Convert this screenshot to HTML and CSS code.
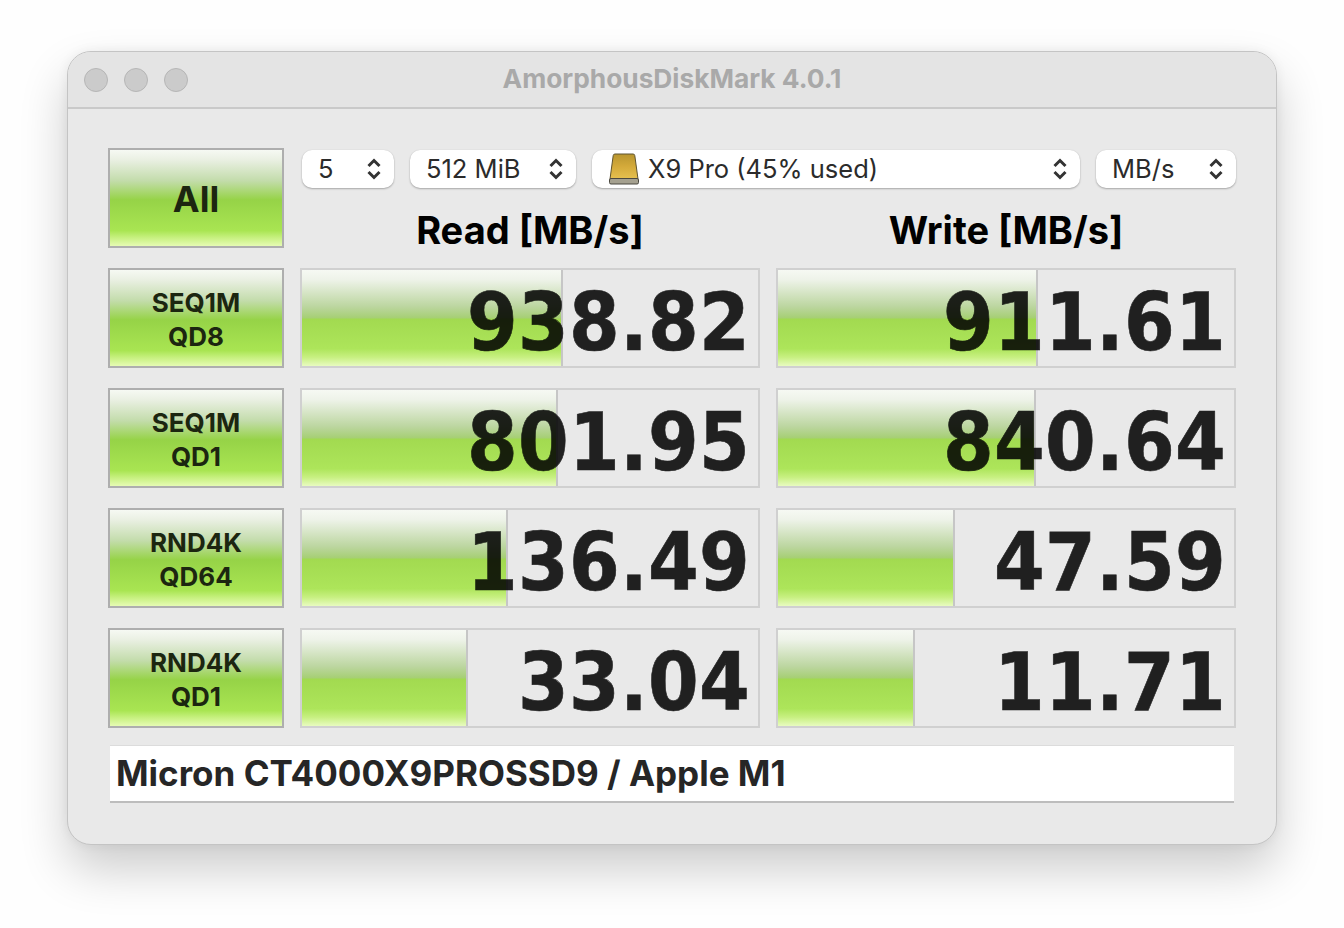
FILE: index.html
```html
<!DOCTYPE html>
<html lang="en">
<head>
    <meta charset="UTF-8">
    <title>AmorphousDiskMark 4.0.1</title>
    <link rel="stylesheet" href="styles.css">
</head>
<body>

    <div class="window">
        <div class="titlebar">
            <div class="lights">
                <span class="light"></span>
                <span class="light"></span>
                <span class="light"></span>
            </div>
            <div class="title">AmorphousDiskMark 4.0.1</div>
        </div>

        <div class="content">
            <div class="board">
                <div class="btn btn-all">All</div>

                <div class="head">
                    <div class="selects">
                        <div class="select sel-count">
                            <span>5</span>
                            <svg class="updown" viewBox="0 0 16 22"><path d="M2.5 8 8 2.5 13.5 8M2.5 14 8 19.5 13.5 14"/></svg>
                        </div>
                        <div class="select sel-size">
                            <span>512 MiB</span>
                            <svg class="updown" viewBox="0 0 16 22"><path d="M2.5 8 8 2.5 13.5 8M2.5 14 8 19.5 13.5 14"/></svg>
                        </div>
                        <div class="select sel-disk">
                            <svg class="disk" viewBox="0 0 30 32">
                                <defs>
                                    <linearGradient id="gold" x1="0" y1="0" x2="0" y2="1">
                                        <stop offset="0" stop-color="#b8952f"/>
                                        <stop offset="0.5" stop-color="#d4aa3a"/>
                                        <stop offset="1" stop-color="#e6c150"/>
                                    </linearGradient>
                                </defs>
                                <path d="M6 1H24Q25.6 1 25.8 2.6L29 26H1L4.2 2.6Q4.4 1 6 1Z" fill="url(#gold)" stroke="#5f5430" stroke-width="1"/>
                                <rect x="0.5" y="25.5" width="29" height="5.5" rx="1.5" fill="#a5a190" stroke="#4a4840" stroke-width="1"/>
                            </svg>
                            <span class="disk-name">X9 Pro (45% used)</span>
                            <svg class="updown" viewBox="0 0 16 22"><path d="M2.5 8 8 2.5 13.5 8M2.5 14 8 19.5 13.5 14"/></svg>
                        </div>
                        <div class="select sel-unit">
                            <span>MB/s</span>
                            <svg class="updown" viewBox="0 0 16 22"><path d="M2.5 8 8 2.5 13.5 8M2.5 14 8 19.5 13.5 14"/></svg>
                        </div>
                    </div>
                    <div class="heads">
                        <div class="heading">Read [MB/s]</div>
                        <div class="heading">Write [MB/s]</div>
                    </div>
                </div>

                <!-- SEQ1M QD8 -->
                <div class="btn">SEQ1M<br>QD8</div>
                <div class="cell"><div class="bar" style="width:261px"></div><div class="val">938.82</div></div>
                <div class="cell"><div class="bar" style="width:260px"></div><div class="val">911.61</div></div>

                <!-- SEQ1M QD1 -->
                <div class="btn">SEQ1M<br>QD1</div>
                <div class="cell"><div class="bar" style="width:256px"></div><div class="val">801.95</div></div>
                <div class="cell"><div class="bar" style="width:258px"></div><div class="val">840.64</div></div>

                <!-- RND4K QD64 -->
                <div class="btn">RND4K<br>QD64</div>
                <div class="cell"><div class="bar" style="width:206px"></div><div class="val">136.49</div></div>
                <div class="cell"><div class="bar" style="width:177px"></div><div class="val">47.59</div></div>

                <!-- RND4K QD1 -->
                <div class="btn">RND4K<br>QD1</div>
                <div class="cell"><div class="bar" style="width:166px"></div><div class="val">33.04</div></div>
                <div class="cell"><div class="bar" style="width:137px"></div><div class="val">11.71</div></div>
            </div>

            <div class="comment">Micron CT4000X9PROSSD9 / Apple M1</div>
        </div>
    </div>

</body>
</html>
```

FILE: styles.css
```css
body {
    margin: 0;
    height: 928px;
    overflow: hidden;
    background-color: #fefefe;
    font-family: 'Inter', 'Liberation Sans', sans-serif;
    color: #222;
}
.window {
    width: 1210px;
    height: 794px;
    margin: 51px 0 0 67px;
    box-sizing: border-box;
    background-color: #e9e9e9;
    border: 1px solid #c4c4c4;
    border-radius: 24px;
    box-shadow: 0 24px 48px rgba(0,0,0,0.2), 0 0 12px rgba(0,0,0,0.06);
    overflow: hidden;
}
.titlebar {
    height: 57px;
    box-sizing: border-box;
    background-color: #e4e4e4;
    border-bottom: 2px solid #c9c9c9;
    display: flex;
    align-items: center;
    justify-content: center;
}
.lights {
    display: flex;
    gap: 16px;
    position: absolute;
    left: 84px;
    top: 68px;
}
.light {
    width: 24px;
    height: 24px;
    box-sizing: border-box;
    border-radius: 50%;
    background-color: #cbcbcb;
    border: 1px solid #b6b6b6;
}
.title {
    font-size: 26.3px;
    font-weight: 700;
    color: #a9a9a9;
    padding-bottom: 2px;
}
.content {
    padding: 39px 40px 0;
}
.board {
    display: grid;
    grid-template-columns: 176px 460px 460px;
    grid-auto-rows: 100px;
    column-gap: 16px;
    row-gap: 20px;
}
.btn {
    box-sizing: border-box;
    border: 2px solid #aeaeae;
    background: linear-gradient(to bottom, #f6f9f3 0%, #eaf0e3 10%, #c3dcab 32%, #96d347 52%, #a9e552 84%, #c6f07e 91%, #e6fbb4 100%);
    display: flex;
    align-items: center;
    justify-content: center;
    text-align: center;
    padding-top: 4px;
    font-size: 26px;
    line-height: 34px;
    font-weight: 700;
    color: #1c2610;
}
.btn-all {
    padding-top: 2px;
    font-size: 36px;
    font-weight: 700;
}
.head {
    grid-column: 2 / 4;
    display: flex;
    flex-direction: column;
}
.selects {
    display: flex;
    gap: 16px;
    margin: 2px 0 0 2px;
}
.select {
    height: 38px;
    box-sizing: border-box;
    background-color: #fff;
    border-radius: 10px;
    box-shadow: 0 1px 2px rgba(0,0,0,0.28), 0 0 1px rgba(0,0,0,0.12);
    display: flex;
    align-items: center;
    justify-content: space-between;
    padding: 0 12px 2px 16px;
    font-size: 25.5px;
    color: #2b2b2b;
    white-space: nowrap;
}
.sel-count { width: 92px; }
.sel-size { width: 166px; }
.sel-disk { width: 488px; padding-left: 17px; }
.sel-unit { width: 140px; }
.disk {
    width: 30px;
    height: 32px;
    flex: none;
    margin-right: 9px;
    position: relative;
    top: 1px;
}
.disk-name {
    flex: 1;
}
.updown {
    width: 16px;
    height: 22px;
    flex: none;
    position: relative;
    top: 1px;
}
.updown path {
    fill: none;
    stroke: #333;
    stroke-width: 3;
}
.heads {
    display: grid;
    grid-template-columns: 460px 460px;
    column-gap: 16px;
    margin-top: 20px;
}
.heading {
    text-align: center;
    font-size: 38px;
    line-height: 44px;
    font-weight: 700;
    color: #000;
}
.cell {
    box-sizing: border-box;
    border: 2px solid #d0d0d0;
    display: grid;
    grid-template-rows: 96px;
    height: 100px;
    overflow: hidden;
}
.bar, .val {
    grid-area: 1 / 1;
}
.bar {
    box-sizing: border-box;
    border-right: 2px solid #c6c6c6;
    background: linear-gradient(to bottom, #f6f9f3 0%, #eef3e9 10%, #bcd6a0 38%, #a6cf74 50%, #a2da50 51%, #ade55a 82%, #c8f082 91%, #e8fbc0 100%);
}
.val {
    font-family: 'DejaVu Sans Condensed', 'DejaVu Sans', sans-serif;
    font-weight: 700;
    font-stretch: condensed;
    font-size: 81px;
    letter-spacing: 0.3px;
    line-height: 104px;
    text-align: right;
    padding-right: 8px;
    color: #000;
    opacity: 0.86;
    -webkit-text-stroke: 0.6px #000;
    white-space: nowrap;
}
.comment {
    margin: 17px 2px 0 2px;
    height: 58px;
    box-sizing: border-box;
    background-color: #fff;
    border-top: 1px solid #dcdcdc;
    border-bottom: 2px solid #bdbdbd;
    padding-left: 6px;
    font-size: 35px;
    line-height: 54px;
    font-weight: 700;
    color: #262626;
}
```
